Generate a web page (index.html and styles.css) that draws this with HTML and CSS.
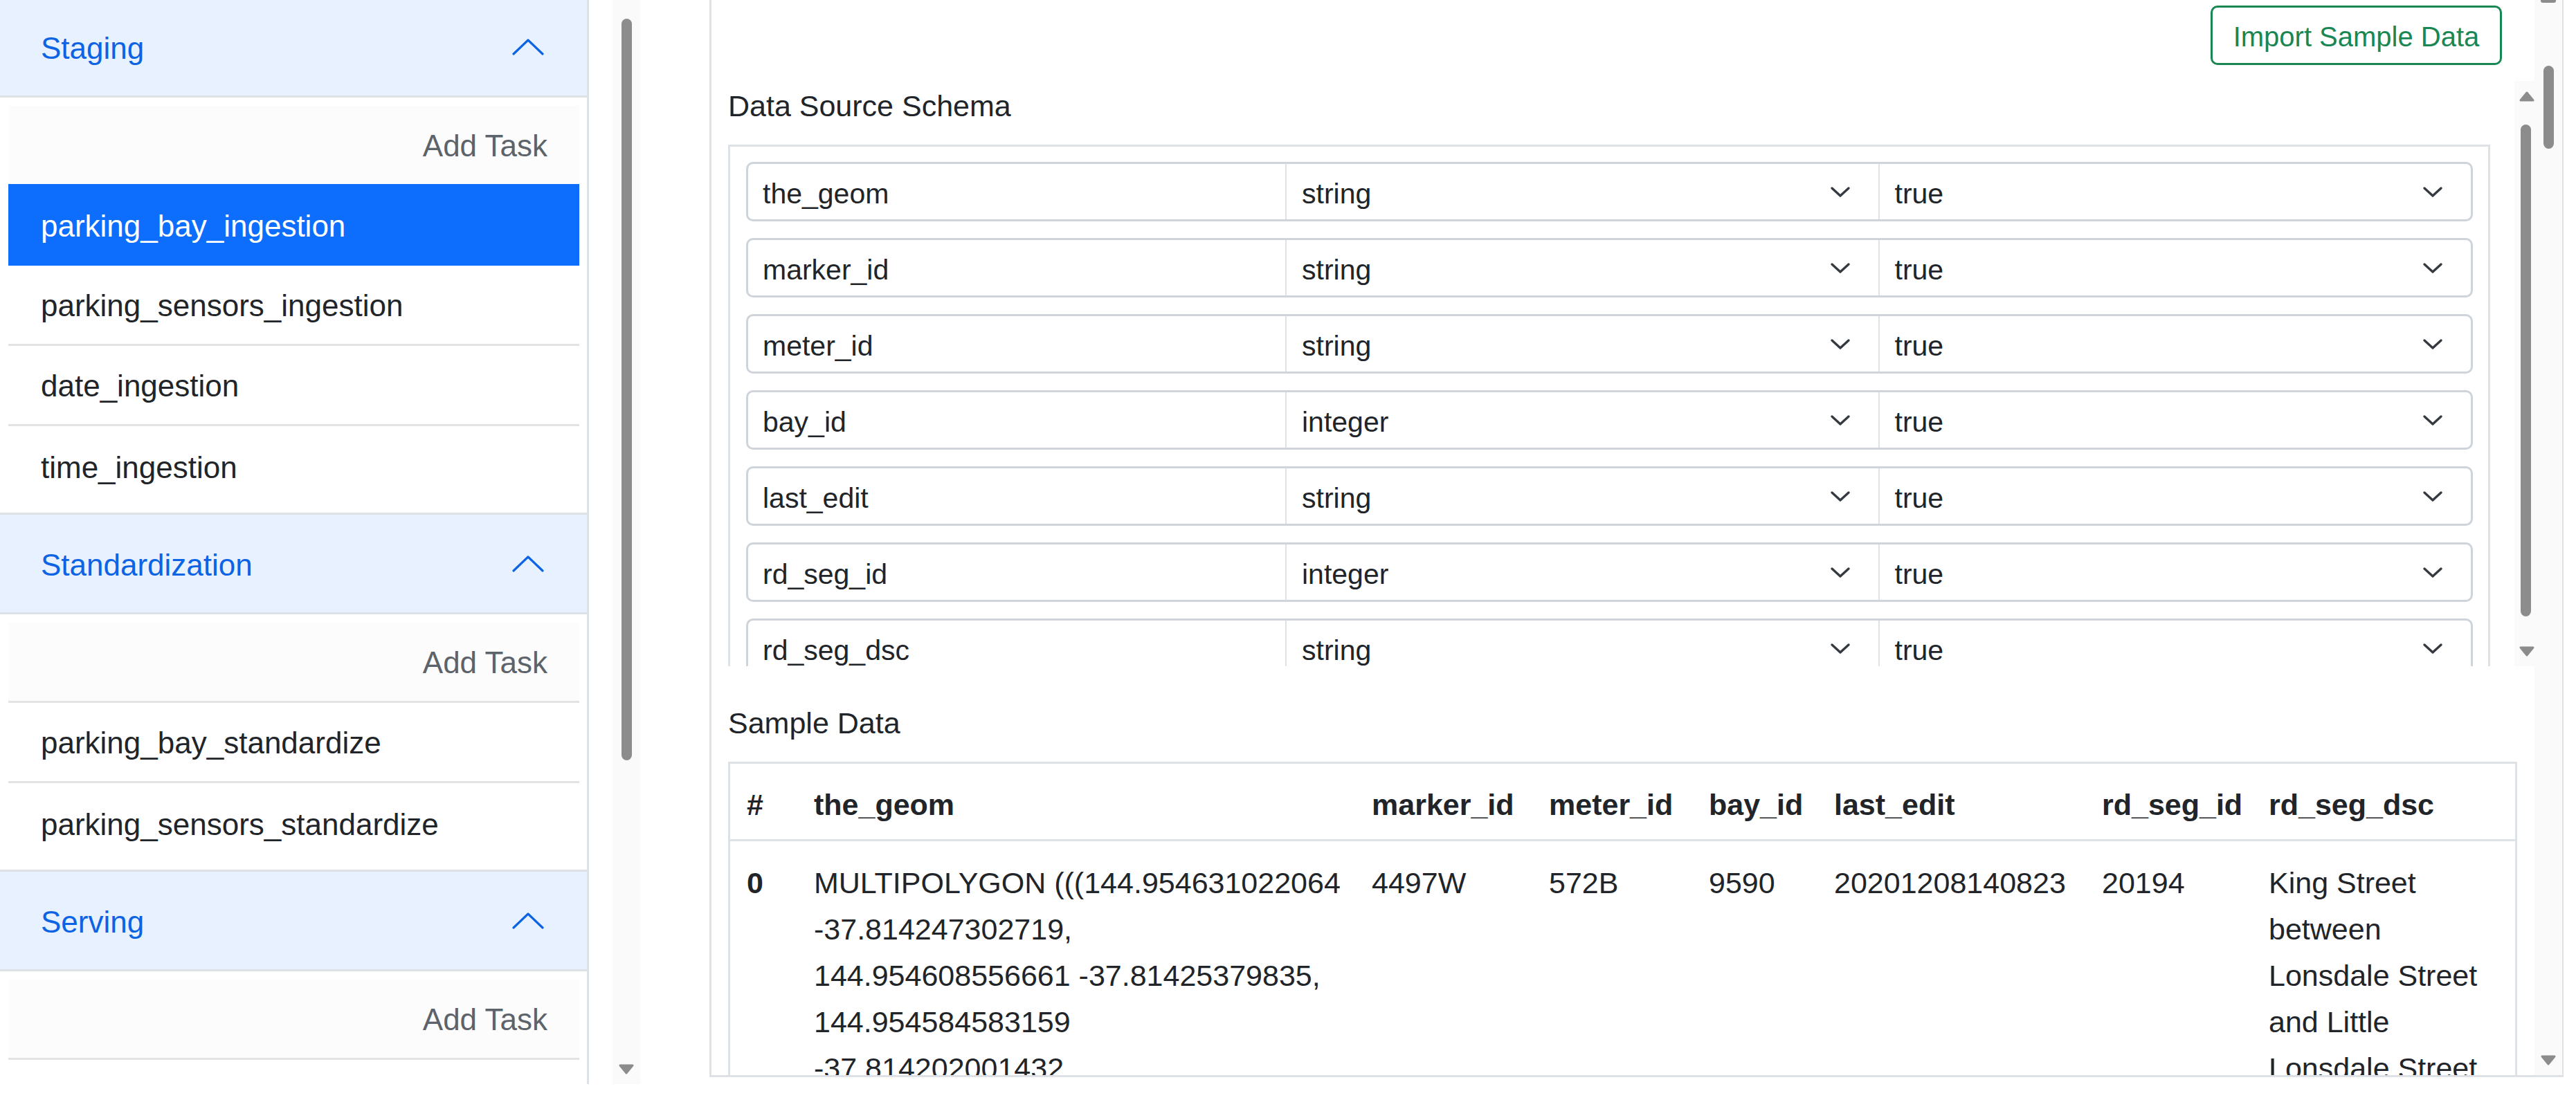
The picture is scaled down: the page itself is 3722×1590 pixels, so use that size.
FILE: index.html
```html
<!DOCTYPE html>
<html lang="en">
<head>
<meta charset="utf-8">
<title>Pipeline Editor</title>
<link rel="stylesheet" href="styles.css">
</head>
<body>
<div class="app">
  <aside class="side">
    <nav class="side-panel">
      <div class="side-inner">
        <section class="acc">
          <div class="acc-head"><span>Staging</span><svg class="chev-up" width="46" height="24" viewBox="0 0 46 24"><polyline points="2,22 23,2 44,22"/></svg></div>
          <div class="acc-body">
            <div class="li add">Add Task</div>
            <div class="li active">parking_bay_ingestion</div>
            <div class="li">parking_sensors_ingestion</div>
            <div class="li">date_ingestion</div>
            <div class="li last">time_ingestion</div>
          </div>
        </section>
        <section class="acc">
          <div class="acc-head"><span>Standardization</span><svg class="chev-up" width="46" height="24" viewBox="0 0 46 24"><polyline points="2,22 23,2 44,22"/></svg></div>
          <div class="acc-body">
            <div class="li add">Add Task</div>
            <div class="li">parking_bay_standardize</div>
            <div class="li last">parking_sensors_standardize</div>
          </div>
        </section>
        <section class="acc">
          <div class="acc-head"><span>Serving</span><svg class="chev-up" width="46" height="24" viewBox="0 0 46 24"><polyline points="2,22 23,2 44,22"/></svg></div>
          <div class="acc-body">
            <div class="li add">Add Task</div>
          </div>
        </section>
      </div>
    </nav>
    <div class="sb sb-side">
      <div class="sb-thumb"></div>
      <div class="sb-fill"></div>
      <svg class="sb-arrow" width="24" height="17" viewBox="0 0 24 17"><polygon points="3,3 21,3 12,14"/></svg>
    </div>
  </aside>

  <main class="main">
    <div class="content">
      <div class="toolbar">
        <button class="btn-import" type="button">Import Sample Data</button>
      </div>

      <div class="schema-scroll">
        <div class="schema-view">
          <h2 class="label">Data Source Schema</h2>
          <div class="schema-box">
            <div class="ig"><div class="ig-name"><span>the_geom</span></div><div class="ig-sel"><span>string</span><svg class="chev" width="30" height="17" viewBox="0 0 30 17"><polyline points="3,3 15,14 27,3"/></svg></div><div class="ig-sel"><span>true</span><svg class="chev" width="30" height="17" viewBox="0 0 30 17"><polyline points="3,3 15,14 27,3"/></svg></div></div>
            <div class="ig"><div class="ig-name"><span>marker_id</span></div><div class="ig-sel"><span>string</span><svg class="chev" width="30" height="17" viewBox="0 0 30 17"><polyline points="3,3 15,14 27,3"/></svg></div><div class="ig-sel"><span>true</span><svg class="chev" width="30" height="17" viewBox="0 0 30 17"><polyline points="3,3 15,14 27,3"/></svg></div></div>
            <div class="ig"><div class="ig-name"><span>meter_id</span></div><div class="ig-sel"><span>string</span><svg class="chev" width="30" height="17" viewBox="0 0 30 17"><polyline points="3,3 15,14 27,3"/></svg></div><div class="ig-sel"><span>true</span><svg class="chev" width="30" height="17" viewBox="0 0 30 17"><polyline points="3,3 15,14 27,3"/></svg></div></div>
            <div class="ig"><div class="ig-name"><span>bay_id</span></div><div class="ig-sel"><span>integer</span><svg class="chev" width="30" height="17" viewBox="0 0 30 17"><polyline points="3,3 15,14 27,3"/></svg></div><div class="ig-sel"><span>true</span><svg class="chev" width="30" height="17" viewBox="0 0 30 17"><polyline points="3,3 15,14 27,3"/></svg></div></div>
            <div class="ig"><div class="ig-name"><span>last_edit</span></div><div class="ig-sel"><span>string</span><svg class="chev" width="30" height="17" viewBox="0 0 30 17"><polyline points="3,3 15,14 27,3"/></svg></div><div class="ig-sel"><span>true</span><svg class="chev" width="30" height="17" viewBox="0 0 30 17"><polyline points="3,3 15,14 27,3"/></svg></div></div>
            <div class="ig"><div class="ig-name"><span>rd_seg_id</span></div><div class="ig-sel"><span>integer</span><svg class="chev" width="30" height="17" viewBox="0 0 30 17"><polyline points="3,3 15,14 27,3"/></svg></div><div class="ig-sel"><span>true</span><svg class="chev" width="30" height="17" viewBox="0 0 30 17"><polyline points="3,3 15,14 27,3"/></svg></div></div>
            <div class="ig"><div class="ig-name"><span>rd_seg_dsc</span></div><div class="ig-sel"><span>string</span><svg class="chev" width="30" height="17" viewBox="0 0 30 17"><polyline points="3,3 15,14 27,3"/></svg></div><div class="ig-sel"><span>true</span><svg class="chev" width="30" height="17" viewBox="0 0 30 17"><polyline points="3,3 15,14 27,3"/></svg></div></div>
          </div>
        </div>
        <div class="sb sb-inner">
          <svg class="sb-arrow up" width="24" height="17" viewBox="0 0 24 17"><polygon points="3,14 21,14 12,3"/></svg>
          <div class="sb-thumb"></div>
          <div class="sb-fill"></div>
          <svg class="sb-arrow" width="24" height="17" viewBox="0 0 24 17"><polygon points="3,3 21,3 12,14"/></svg>
        </div>
      </div>

      <h2 class="label sample-label">Sample Data</h2>
      <table class="data">
        <colgroup>
          <col class="c-idx"><col class="c-geom"><col class="c-marker"><col class="c-meter"><col class="c-bay"><col class="c-edit"><col class="c-segid"><col class="c-segdsc">
        </colgroup>
        <thead>
          <tr><th>#</th><th>the_geom</th><th>marker_id</th><th>meter_id</th><th>bay_id</th><th>last_edit</th><th>rd_seg_id</th><th>rd_seg_dsc</th></tr>
        </thead>
        <tbody>
          <tr>
            <th>0</th>
            <td>MULTIPOLYGON (((144.954631022064<br>-37.814247302719,<br>144.954608556661 -37.81425379835,<br>144.954584583159<br>-37.814202001432</td>
            <td>4497W</td>
            <td>572B</td>
            <td>9590</td>
            <td>20201208140823</td>
            <td>20194</td>
            <td>King Street<br>between<br>Lonsdale Street<br>and Little<br>Lonsdale Street</td>
          </tr>
        </tbody>
      </table>
    </div>
    <div class="sb sb-main">
      <div class="sb-cap"></div>
      <div class="sb-thumb"></div>
      <div class="sb-fill"></div>
      <svg class="sb-arrow" width="24" height="17" viewBox="0 0 24 17"><polygon points="3,3 21,3 12,14"/></svg>
    </div>
  </main>
</div>
</body>
</html>
```

FILE: styles.css
```css
* { box-sizing: border-box; }

html, body {
  margin: 0;
  padding: 0;
  background: #ffffff;
}

body {
  width: 3722px;
  height: 1590px;
  overflow: hidden;
  font-family: "Liberation Sans", Arial, sans-serif;
  color: #212529;
}

.app {
  display: flex;
  align-items: flex-start;
  height: 1590px;
}

/* ---------- Sidebar ---------- */
.side {
  display: flex;
  flex: 0 0 925px;
  height: 1567px;
  gap: 34px;
}

.side-panel {
  width: 851px;
  height: 1567px;
  border-right: 3px solid #dee2e6;
  overflow: hidden;
}

.side-inner {
  margin-top: -6px;
}

.acc {
  border-top: 3px solid #dee2e6;
}

.acc-head {
  height: 144px;
  display: flex;
  align-items: center;
  justify-content: space-between;
  padding: 0 62px 0 59px;
  background: #e7f1ff;
  border-bottom: 3px solid #dee2e6;
  color: #0c63e4;
  font-size: 44px;
}

.acc-head span {
  padding-top: 4px;
}

.chev-up polyline {
  fill: none;
  stroke: #0c63e4;
  stroke-width: 3.2;
  stroke-linecap: round;
  stroke-linejoin: round;
}

.acc-body {
  padding: 12px 11px 9px 12px;
}

.li {
  height: 116px;
  display: flex;
  align-items: center;
  padding: 3px 46px 0 47px;
  font-size: 44px;
  color: #212529;
  background: #ffffff;
  border-bottom: 3px solid #e2e3e5;
}

.li.last {
  border-bottom: 0;
}

.li.add {
  justify-content: flex-end;
  background: #fcfcfc;
  color: #5c636a;
}

.li.active {
  position: relative;
  margin-top: -3px;
  height: 118px;
  background: #0d6efd;
  color: #ffffff;
  border-bottom: 0;
}

/* ---------- Fake scrollbars ---------- */
.sb {
  display: flex;
  flex-direction: column;
  align-items: center;
  background: #fafafa;
}

.sb-thumb {
  width: 15px;
  border-radius: 8px;
  background: #8c8c8c;
}

.sb-fill {
  flex: 1;
}

.sb-arrow polygon {
  fill: #8c8c8c;
  stroke: #8c8c8c;
  stroke-width: 3;
  stroke-linejoin: round;
}

.sb-side {
  width: 40px;
  height: 1567px;
}

.sb-side .sb-thumb {
  margin-top: 27px;
  height: 1072px;
}

.sb-side .sb-arrow {
  margin-bottom: 13px;
}

/* ---------- Main ---------- */
.main {
  margin-left: 100px;
  width: 2679px;
  height: 1557px;
  display: flex;
  border-left: 3px solid #dee2e6;
  border-right: 2px solid #dee2e6;
  border-bottom: 3px solid #dee2e6;
  overflow: hidden;
}

.content {
  width: 2634px;
  height: 1554px;
  overflow: hidden;
  padding-left: 24px;
}

.toolbar {
  height: 117px;
  display: flex;
  justify-content: flex-end;
  align-items: flex-start;
  padding: 8px 47px 0 0;
  margin-left: -24px;
}

.btn-import {
  width: 421px;
  height: 86px;
  border: 3px solid #198754;
  border-radius: 10px;
  background: #ffffff;
  color: #198754;
  font-family: "Liberation Sans", Arial, sans-serif;
  font-size: 40px;
  padding: 5px 0 0;
}

.schema-scroll {
  display: flex;
  height: 846px;
  margin-left: -24px;
}

.schema-view {
  flex: 1;
  height: 846px;
  overflow: hidden;
  padding: 5px 35px 0 24px;
}

.label {
  margin: 0;
  font-weight: normal;
  font-size: 43px;
  line-height: 63px;
  color: #212529;
}

.schema-box {
  margin-top: 24px;
  border: 3px solid #dee2e6;
  border-bottom: 0;
  padding: 22px 22px 0 23px;
}

.ig {
  display: flex;
  height: 86px;
  margin-bottom: 24px;
  border: 3px solid #ced4da;
  border-radius: 10px;
  font-size: 41px;
  color: #212529;
}

.ig-name {
  flex: 0 0 776px;
  display: flex;
  align-items: center;
  padding-left: 21px;
}

.ig-sel {
  flex: 1;
  display: flex;
  align-items: center;
  justify-content: space-between;
  padding: 0 40px 0 22px;
  border-left: 2px solid #dee2e6;
}

.ig-name span,
.ig-sel span {
  padding-top: 6px;
}

.chev polyline {
  fill: none;
  stroke: #343a40;
  stroke-width: 3.4;
  stroke-linecap: round;
  stroke-linejoin: round;
}

.sb-inner {
  width: 29px;
  height: 846px;
}

.sb-inner .sb-arrow.up {
  margin-top: 14px;
  margin-left: 6px;
}

.sb-inner .sb-thumb {
  margin-top: 19px;
  margin-left: 4px;
  height: 711px;
}

.sb-inner .sb-arrow {
  margin-bottom: 13px;
  margin-left: 6px;
}

.sample-label {
  margin-top: 51px;
}

/* ---------- Table ---------- */
.data {
  margin-top: 24px;
  width: 2585px;
  table-layout: fixed;
  border-collapse: separate;
  border-spacing: 0;
  border: 3px solid #dee2e6;
  border-bottom: 0;
  font-size: 43px;
  line-height: 67px;
}

.c-idx { width: 97px; }
.c-geom { width: 806px; }
.c-marker { width: 256px; }
.c-meter { width: 231px; }
.c-bay { width: 181px; }
.c-edit { width: 387px; }
.c-segid { width: 241px; }
.c-segdsc { width: 380px; }

.data th,
.data td {
  text-align: left;
  vertical-align: top;
  padding: 0 10px 0 24px;
  white-space: nowrap;
}

.data thead th {
  font-weight: bold;
  padding-top: 26px;
  padding-bottom: 16px;
  border-bottom: 3px solid #dee2e6;
}

.data tbody th,
.data tbody td {
  padding-top: 27px;
}

.data tbody th {
  font-weight: bold;
}

/* ---------- Main scrollbar ---------- */
.sb-main {
  width: 40px;
  height: 1554px;
}

.sb-main .sb-cap {
  width: 22px;
  height: 4px;
  background: #8c8c8c;
  border-radius: 0 0 3px 3px;
}

.sb-main .sb-thumb {
  margin-top: 91px;
  height: 120px;
}

.sb-main .sb-arrow {
  margin-bottom: 13px;
}
```
